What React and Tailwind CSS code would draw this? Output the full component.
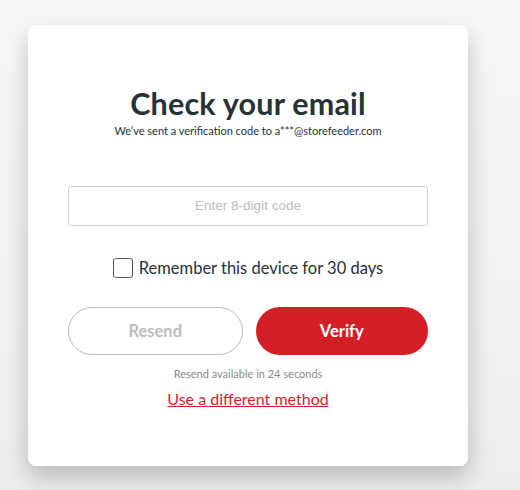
import React, { useState } from 'react';

export default function App() {
  const [code, setCode] = useState('');
  const [remember, setRemember] = useState(false);

  return (
    <div className="min-h-screen w-full bg-gradient-to-b from-[#f7f8f8] to-[#eceeee] pt-[25px] pl-[28px] font-['Lato',sans-serif]">
      {/* Card */}
      <div className="w-[440px] h-[441px] bg-white rounded-lg shadow-[0_12px_24px_rgba(0,0,0,0.22)] flex flex-col items-center pt-[60px] px-10">
        <h1 className="text-[30.5px] leading-9 font-bold text-[#263238] tracking-[0.2px]">Check your email</h1>
        <p className="mt-[2px] text-[11px] text-[#263238]">We’ve sent a verification code to a***@storefeeder.com</p>

        <input
          type="text"
          value={code}
          onChange={(e) => setCode(e.target.value)}
          placeholder="Enter 8-digit code"
          className="mt-[46px] w-full h-[40px] border border-[#cfcfcf] rounded-[3px] text-center text-[13.5px] font-['Liberation_Sans',sans-serif] text-[#333] placeholder:text-[#bdbdbd] outline-none"
        />

        <label className="mt-[30px] flex items-center gap-[6px] cursor-pointer">
          <input
            type="checkbox"
            checked={remember}
            onChange={(e) => setRemember(e.target.checked)}
            className="appearance-none w-[20px] h-[20px] border border-[#555] rounded-[3px] bg-white"
          />
          <span className="text-[16.5px] text-[#263238]">Remember this device for 30 days</span>
        </label>

        <div className="mt-[27px] w-full flex gap-[13px]">
          <button className="flex-1 h-[48px] rounded-full border border-[#bdbdbd] bg-white text-[16.5px] font-bold text-[#bdbdbd]">
            Resend
          </button>
          <button className="flex-1 h-[48px] rounded-full bg-[#d51f26] text-[16.5px] font-bold text-white">
            Verify
          </button>
        </div>

        <p className="mt-[11px] text-[11px] text-[#8a8a8a]">Resend available in 24 seconds</p>
        <a href="#" className="mt-[4px] text-[16px] text-[#d51f26] underline">Use a different method</a>
      </div>
    </div>
  );
}
